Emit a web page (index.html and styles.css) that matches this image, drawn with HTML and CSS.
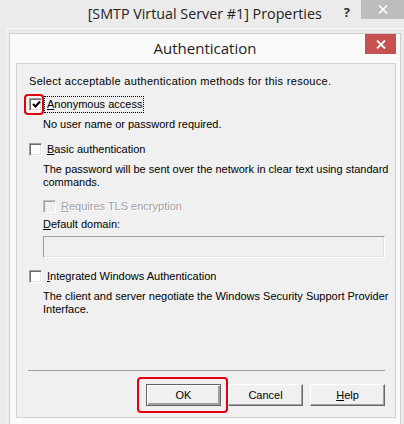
FILE: index.html
```html
<!DOCTYPE html>
<html lang="en">

<head>
    <title>Authentication</title>
    <meta charset="UTF-8">
    <link rel="stylesheet" href="styles.css">
</head>

<body>
    <div class="win-titlebar">
        <div class="win-title">[SMTP Virtual Server #1] Properties</div>
        <div class="win-help">?</div>
        <div class="win-close">
            <svg width="10" height="9" viewBox="0 0 10 9"><path d="M1 0.5 L9 8.5 M9 0.5 L1 8.5" stroke="#fff" stroke-width="1.6" /></svg>
        </div>
    </div>

    <div class="win-frame">
        <div class="dlg">
            <div class="dlg-header">
                <div class="dlg-title">Authentication</div>
                <div class="dlg-close">
                    <svg width="10" height="9" viewBox="0 0 10 9"><path d="M1 0.5 L9 8.5 M9 0.5 L1 8.5" stroke="#fff" stroke-width="1.8" /></svg>
                </div>
            </div>

            <div class="panel">
                <p class="intro">Select acceptable authentication methods for this resouce.</p>

                <div class="check-row row-anon">
                    <span class="check checked mark-red">
                        <svg width="9" height="9" viewBox="0 0 9 9"><path d="M1 4 L3.5 6.5 L8 1.5" stroke="#000" stroke-width="2" fill="none" /></svg>
                    </span>
                    <span class="check-label focused"><u>A</u>nonymous access</span>
                </div>
                <p class="desc desc-anon">No user name or password required.</p>

                <div class="check-row row-basic">
                    <span class="check"></span>
                    <span class="check-label"><u>B</u>asic authentication</span>
                </div>
                <p class="desc desc-basic">The password will be sent over the network in clear text using standard<br>commands.</p>

                <div class="check-row sub-row row-tls disabled">
                    <span class="check"></span>
                    <span class="check-label"><u>R</u>equires TLS encryption</span>
                </div>
                <p class="desc domain-label"><u>D</u>efault domain:</p>
                <div class="domain-input"></div>

                <div class="check-row row-win">
                    <span class="check"></span>
                    <span class="check-label"><u>I</u>ntegrated Windows Authentication</span>
                </div>
                <p class="desc desc-win">The client and server negotiate the Windows Security Support Provider<br>Interface.</p>

                <div class="dlg-footer">
                    <div class="btn-row">
                        <span class="btn-wrap mark-red"><button class="btn btn-default">OK</button></span>
                        <button class="btn">Cancel</button>
                        <button class="btn"><u>H</u>elp</button>
                    </div>
                </div>
            </div>
        </div>
    </div>
</body>

</html>
```

FILE: styles.css
```css
* {
    box-sizing: border-box;
}

body {
    margin: 0;
    width: 404px;
    height: 424px;
    overflow: hidden;
    background-color: #ebebeb;
    display: flex;
    flex-direction: column;
    font-family: 'Liberation Sans', Arial, sans-serif;
}

/* outer window title bar */

.win-titlebar {
    height: 28px;
    display: flex;
    align-items: flex-start;
    justify-content: flex-end;
}

.win-title {
    margin-top: 4px;
    margin-right: 22px;
    font-family: 'Open Sans', sans-serif;
    font-size: 14.3px;
    color: #222;
    white-space: nowrap;
}

.win-help {
    margin-top: 3px;
    margin-right: 11px;
    font-family: 'Open Sans', sans-serif;
    font-weight: bold;
    font-size: 13px;
    color: #333;
}

.win-close {
    width: 43px;
    height: 19px;
    background-color: #bdbdbd;
    display: flex;
    align-items: center;
    justify-content: center;
}

.win-frame {
    flex: 1;
    display: flex;
    margin-left: 6px;
    padding: 4px 3px 0 2px;
    border-left: 1px solid #f6f6f6;
    border-top: 1px solid #f6f6f6;
}

/* inner dialog */

.dlg {
    flex: 1;
    display: flex;
    flex-direction: column;
    background-color: #fafafa;
    border: 1px solid #cfcfcf;
    border-bottom: none;
}

.dlg-header {
    height: 29px;
    display: flex;
    justify-content: center;
    position: relative;
}

.dlg-title {
    margin-top: 4px;
    font-family: 'Open Sans', sans-serif;
    font-size: 15px;
    color: #222;
}

.dlg-close {
    position: absolute;
    top: 0;
    right: 4px;
    width: 31px;
    height: 20px;
    background-color: #c75050;
    display: flex;
    align-items: center;
    justify-content: center;
}

.panel {
    flex: 1;
    display: flex;
    flex-direction: column;
    margin: 0 4px 6px 6px;
    padding: 11px 0 0 12px;
    background-color: #f0f0f0;
    border: 1px solid #d3d3d3;
    font-size: 11px;
    line-height: 13px;
    color: #000;
}

.panel p {
    margin: 0;
}

.intro {
    letter-spacing: 0.3px;
}

.desc {
    padding-left: 14px;
    white-space: nowrap;
}

.check-row {
    height: 16px;
    display: flex;
    align-items: center;
}

.sub-row {
    padding-left: 14px;
}

.row-anon {
    margin-top: 8px;
}

.desc-anon {
    margin-top: 6px !important;
}

.row-basic {
    margin-top: 10px;
}

.desc-basic {
    margin-top: 6px !important;
}

.row-tls {
    margin-top: 9px;
}

.domain-label {
    margin-top: 4px !important;
}

.row-win {
    margin-top: 10px;
}

.desc-win {
    margin-top: 6px !important;
}

/* classic sunken checkbox */

.check {
    position: relative;
    width: 13px;
    height: 13px;
    flex: none;
    background-color: #fff;
    border: 1px solid;
    border-color: #a0a0a0 #fff #fff #a0a0a0;
    box-shadow: inset 1px 1px #696969, inset -1px -1px #e3e3e3;
    display: flex;
    align-items: center;
    justify-content: center;
}

.check svg {
    margin: 1px 0 0 1px;
}

.check-label {
    margin-left: 5px;
    white-space: nowrap;
}

.check-label.focused {
    margin-left: 3px;
    padding: 1px 1px 1px 2px;
    outline: 1px dotted #000;
}

.disabled .check {
    background-color: #f0f0f0;
    border-color: #c0c0c0 #fff #fff #c0c0c0;
    box-shadow: inset 1px 1px #a0a0a0, inset -1px -1px #f0f0f0;
}

.disabled .check-label {
    color: #a0a0a0;
    text-shadow: 1px 1px #fff;
}

.domain-input {
    margin: 5px 10px 0 14px;
    height: 22px;
    background-color: #f0f0f0;
    border: 1px solid;
    border-color: #a0a0a0 #fff #fff #a0a0a0;
    box-shadow: inset -1px -1px #e3e3e3;
}

/* red call-outs from the screenshot */

.mark-red {
    position: relative;
}

.mark-red:after {
    content: "";
    position: absolute;
    border: 2px solid #e3000f;
    border-radius: 4px;
}

.check.mark-red:after {
    top: -5px;
    left: -6px;
    right: -3px;
    bottom: -5px;
}

.btn-wrap.mark-red:after {
    top: -7px;
    left: -9px;
    right: -7px;
    bottom: -7px;
}

/* footer buttons */

.dlg-footer {
    margin-top: auto;
    padding: 0 10px 11px 11px;
    margin-left: -12px;
}

.btn-row {
    border-top: 1px solid #a0a0a0;
    padding-top: 13px;
    display: flex;
    justify-content: flex-end;
    gap: 7px;
}

.btn-wrap {
    display: flex;
}

.btn {
    width: 75px;
    height: 22px;
    margin: 0;
    padding: 0;
    font-family: 'Liberation Sans', Arial, sans-serif;
    font-size: 11px;
    color: #000;
    background-color: #f0f0f0;
    border: 1px solid;
    border-color: #fff #696969 #696969 #fff;
    box-shadow: inset -1px -1px #a0a0a0;
}

.btn-default {
    border: 1px solid #646464;
    box-shadow: inset 1px 1px #fff, inset -2px -2px #a0a0a0;
}
```
